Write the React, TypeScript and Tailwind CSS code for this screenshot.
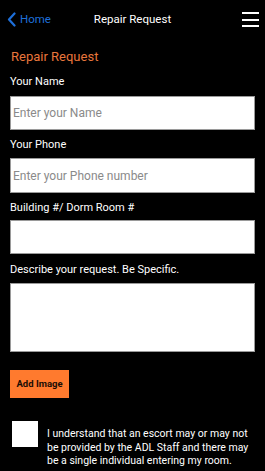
import React from 'react';

const App: React.FC = () => {
  return (
    <div className="w-[265px] h-[471px] overflow-hidden bg-black text-white font-['Roboto',sans-serif]">
      {/* Top bar */}
      <div className="relative flex items-center h-[38px] pt-[1px] px-[7px]">
        <div className="flex items-center gap-[4px] text-[#1e6fd9]">
          <svg width="9" height="15" viewBox="0 0 9 15" fill="none">
            <path d="M7.5 1.5L2 7.5L7.5 13.5" stroke="#1e6fd9" strokeWidth="2.2" strokeLinecap="round" strokeLinejoin="round" />
          </svg>
          <span className="text-[11.5px] leading-none">Home</span>
        </div>
        <div className="absolute left-0 right-0 text-center text-[11.5px] leading-none pointer-events-none">Repair Request</div>
        <div className="ml-auto flex flex-col gap-[4.5px] mr-[-1px]">
          <div className="w-[17px] h-[2px] bg-white" />
          <div className="w-[17px] h-[2px] bg-white" />
          <div className="w-[17px] h-[2px] bg-white" />
        </div>
      </div>

      <div className="px-[10px]">
        <div className="pt-[12px] text-[13px] leading-none text-[#e8763c] pl-[1px]">Repair Request</div>

        <div className="mt-[13px] text-[11px] leading-none">Your Name</div>
        <input
          className="mt-[9px] block w-full h-[34px] bg-white border border-[#9a9a9a] px-[2px] text-[12px] text-black placeholder:text-[#8a8a8a] outline-none"
          placeholder="Enter your Name"
        />

        <div className="mt-[9px] text-[11px] leading-none">Your Phone</div>
        <input
          className="mt-[8px] block w-full h-[35px] bg-white border border-[#9a9a9a] px-[2px] text-[12px] text-black placeholder:text-[#8a8a8a] outline-none"
          placeholder="Enter your Phone number"
        />

        <div className="mt-[9px] text-[11px] leading-none">Building #/ Dorm Room #</div>
        <input className="mt-[7px] block w-full h-[34px] bg-white border border-[#9a9a9a] px-[2px] text-[12px] text-black outline-none" />

        <div className="mt-[10px] text-[11px] leading-none">Describe your request. Be Specific.</div>
        <textarea className="mt-[8px] block w-full h-[69px] bg-white border border-[#9a9a9a] px-[2px] text-[12px] text-black outline-none resize-none" />

        <button className="mt-[18px] block w-[59px] h-[28px] bg-[#ff7a2e] text-[#1a0d05] text-[9.5px] font-bold">Add Image</button>

        <div className="mt-[23px] flex items-start">
          <div className="ml-[2px] w-[26px] h-[26px] bg-white shrink-0" />
          <p className="ml-[9px] mt-[6px] text-[10.5px] leading-[13.5px]">
            I understand that an escort may or may not be provided by the ADL Staff and there may be a single individual entering my room.
          </p>
        </div>
      </div>
    </div>
  );
};

export default App;
